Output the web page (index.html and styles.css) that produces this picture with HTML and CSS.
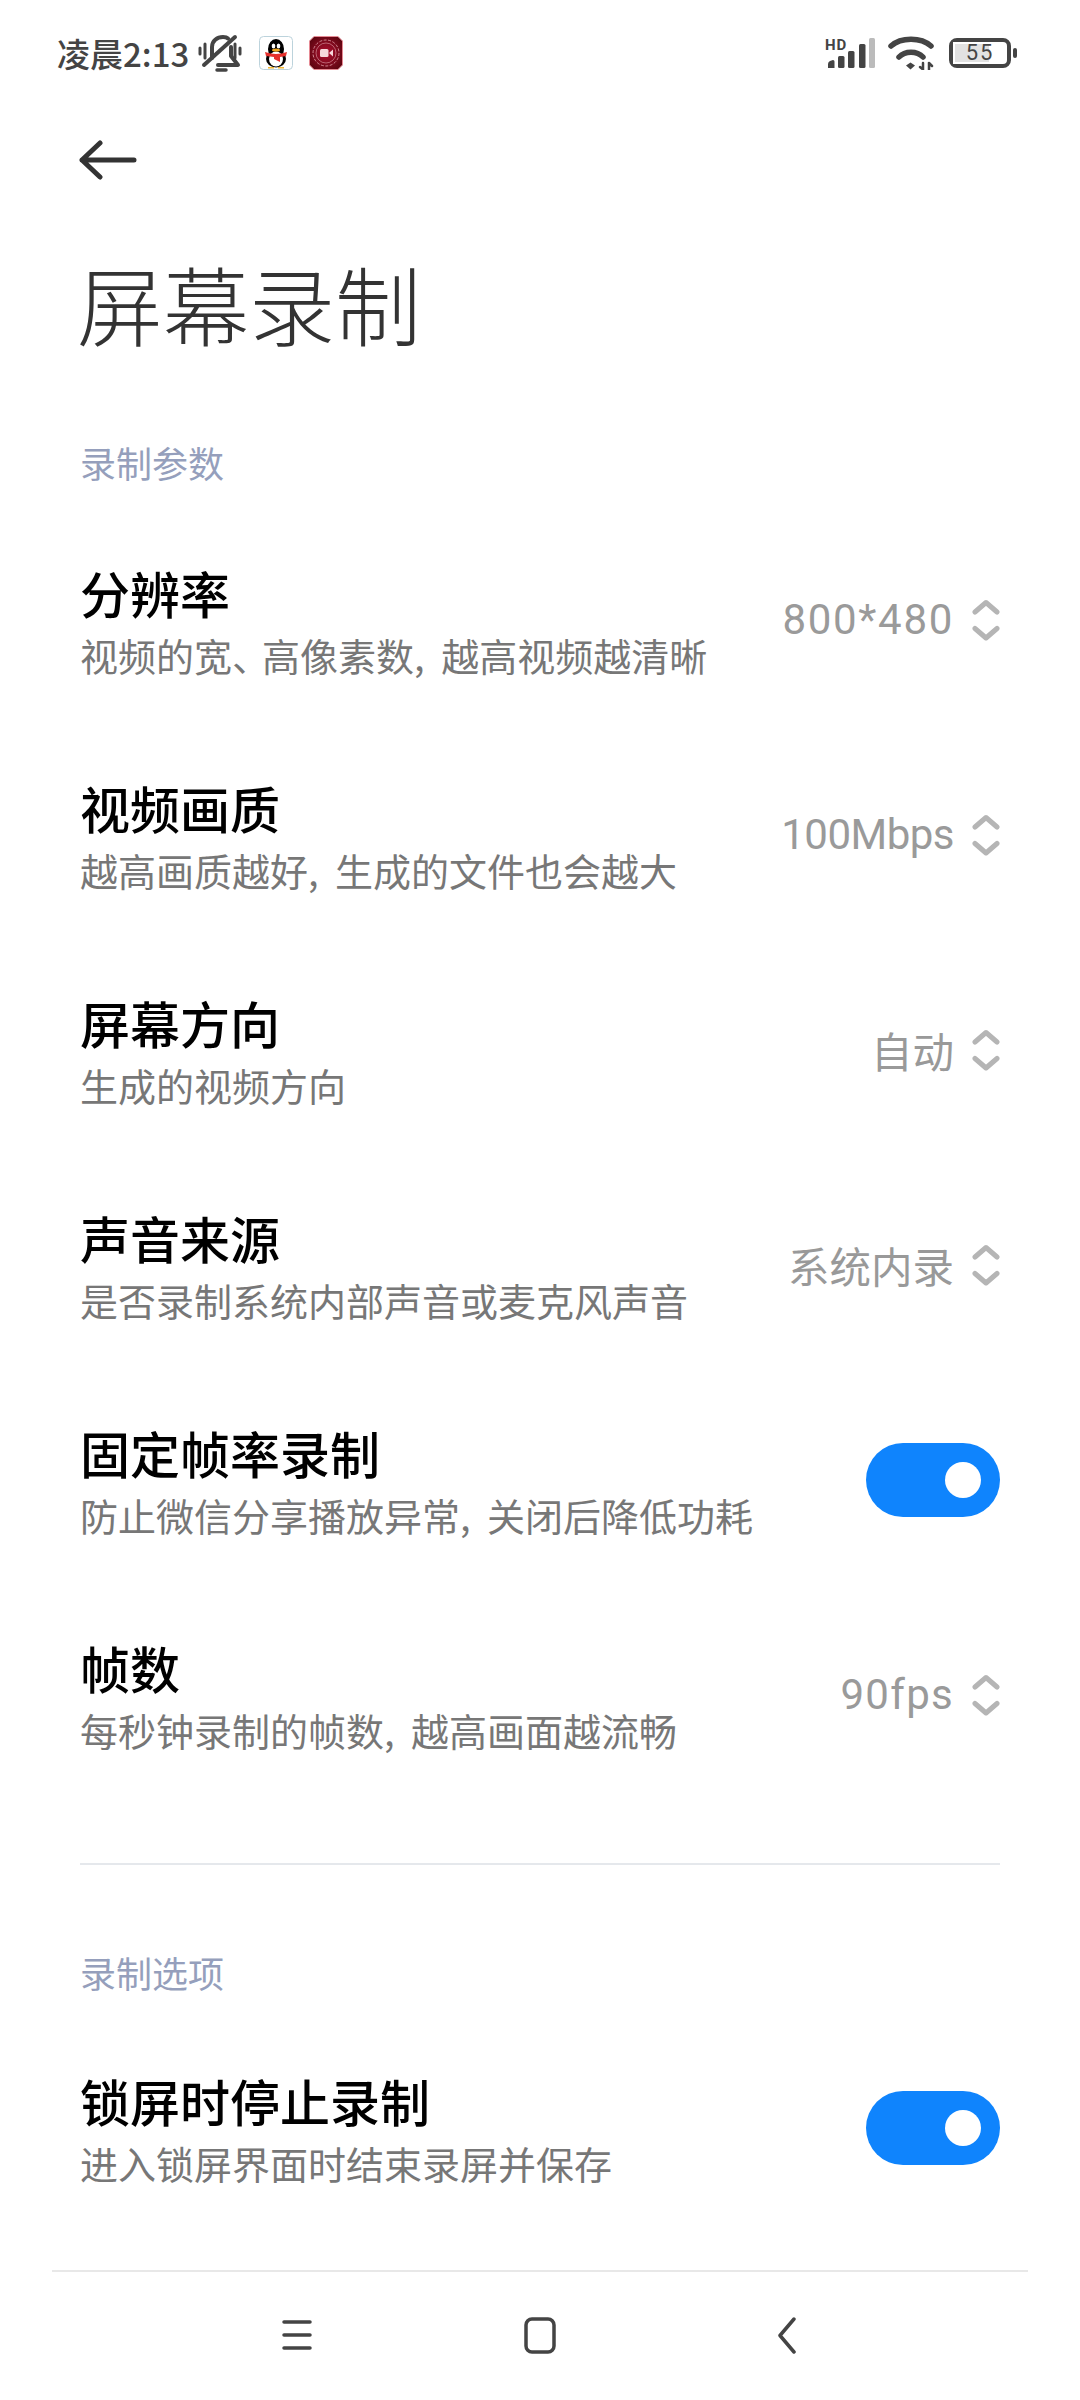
FILE: index.html
```html
<!DOCTYPE html>
<html lang="zh-CN">
<head>
<meta charset="utf-8">
<title>屏幕录制</title>
<link rel="stylesheet" href="styles.css">
</head>
<body>
<div class="page">
  <header class="status">
    <div class="status-left">
      <span class="time">凌晨2:13</span>
      <svg class="ico-bell" viewBox="0 0 45 40" fill="none" stroke="#444" stroke-width="4" stroke-linecap="round" stroke-linejoin="round">
        <path d="M14 25 V14 C14 8 19 4 25 4 C27 4 29 4.500 30 5.500"/>
        <path d="M33 14 V23 L40 32 H20"/>
        <path d="M6 32 L37 4"/>
        <path d="M2 15 V21 M7 11 V25 M37 11 V25 M42 15 V21" stroke-width="3"/>
        <path d="M19 37 H28" stroke-width="3.500"/>
      </svg>
      <svg class="ico-app" viewBox="0 0 34 34">
        <rect x=".5" y=".5" width="33" height="33" rx="4" fill="#fff" stroke="#bcd3dc"/>
        <ellipse cx="17" cy="13" rx="8" ry="10" fill="#000"/>
        <ellipse cx="17" cy="23" rx="10" ry="8.500" fill="#000"/>
        <ellipse cx="17" cy="23" rx="7" ry="7.500" fill="#fff"/>
        <ellipse cx="14.500" cy="10" rx="1.800" ry="2.500" fill="#fff"/>
        <ellipse cx="19.500" cy="10" rx="1.800" ry="2.500" fill="#fff"/>
        <ellipse cx="17" cy="14" rx="4" ry="1.600" fill="#f2a81d"/>
        <path d="M6 16 Q17 20 28 16 L27 20 L21 21 V26 L15 23 V21 L7 20 Z" fill="#e5302c"/>
        <path d="M9 31 H15 V32.500 H9 Z M19 31 H25 V32.500 H19 Z" fill="#f2b632"/>
      </svg>
      <svg class="ico-app" viewBox="0 0 34 34">
        <defs>
          <radialGradient id="recbg" cx="50%" cy="50%" r="60%">
            <stop offset="0" stop-color="#b01030"/>
            <stop offset="1" stop-color="#5c0510"/>
          </radialGradient>
        </defs>
        <path d="M5 .5 H29 L33.500 5 V29 L29 33.500 H5 L.5 29 V5 Z" fill="url(#recbg)" stroke="#e68a94"/>
        <circle cx="17" cy="17" r="13" fill="none" stroke="#f1b9c0" stroke-width=".7" stroke-dasharray="3 1.500"/>
        <circle cx="17" cy="17" r="10" fill="none" stroke="#f1b9c0" stroke-width=".5"/>
        <rect x="11" y="13" width="8.500" height="8" rx="1.500" fill="#f6d9dc"/>
        <path d="M20 17 L24 13.500 V20.500 Z" fill="#f6d9dc"/>
      </svg>
    </div>
    <div class="status-right">
      <svg class="ico-signal" viewBox="0 0 50 34">
        <text class="hd" x="0" y="14">HD</text>
        <path d="M3 32 V28 Q3 26 5 25 L8 24 Q9.500 24 9.500 25.500 V32 Z" fill="#444"/>
        <rect x="13" y="20" width="6.500" height="12" rx="1.500" fill="#444"/>
        <rect x="23" y="15" width="6.500" height="17" rx="1.500" fill="#444"/>
        <rect x="34" y="8" width="6.500" height="24" rx="1.500" fill="#444"/>
        <rect x="44" y="2" width="6" height="30" rx="1.500" fill="#bbb"/>
      </svg>
      <svg class="ico-wifi" viewBox="0 0 47 34" fill="none" stroke="#444" stroke-linecap="round">
        <path d="M3 10 C13 1 33 1 43 10" stroke-width="5.500"/>
        <path d="M11 21 C17 14.500 29 14.500 35 21" stroke-width="5.500"/>
        <path d="M18 29.500 L22.500 26.500 L27 29.500 L22.500 33.500 Z" fill="#444" stroke="none"/>
        <path d="M35 27 V33.500 M32 31 L35 33.500 M41 33.500 V27 M41 27 L44 30" stroke-width="2.500"/>
      </svg>
      <div class="battery">
        <div class="battery-body">
          <div class="battery-fill"></div>
          <span class="battery-num">55</span>
        </div>
        <div class="battery-cap"></div>
      </div>
    </div>
  </header>

  <main class="main">
    <svg class="back" viewBox="0 0 58 40" fill="none" stroke="#333" stroke-width="5" stroke-linecap="round" stroke-linejoin="round">
      <path d="M3 20 H55 M21 3 L3 20 L21 37"/>
    </svg>
    <h1 class="title">屏幕录制</h1>

    <h2 class="section">录制参数</h2>
    <div class="row">
      <div class="text"><div class="name">分辨率</div><div class="desc">视频的宽<span class="dun">、</span>高像素数<span class="comma">,</span> 越高视频越清晰</div></div>
      <div class="value"><span class="num num-wide">800*480</span><svg class="updown" viewBox="0 0 28 42"><path d="M3 13 L14 3.500 L25 13 M3 29.500 L14 39 L25 29.500"/></svg></div>
    </div>
    <div class="row">
      <div class="text"><div class="name">视频画质</div><div class="desc">越高画质越好<span class="comma">,</span> 生成的文件也会越大</div></div>
      <div class="value"><span class="num num-tight">100Mbps</span><svg class="updown" viewBox="0 0 28 42"><path d="M3 13 L14 3.500 L25 13 M3 29.500 L14 39 L25 29.500"/></svg></div>
    </div>
    <div class="row">
      <div class="text"><div class="name">屏幕方向</div><div class="desc">生成的视频方向</div></div>
      <div class="value"><span class="cjk">自动</span><svg class="updown" viewBox="0 0 28 42"><path d="M3 13 L14 3.500 L25 13 M3 29.500 L14 39 L25 29.500"/></svg></div>
    </div>
    <div class="row">
      <div class="text"><div class="name">声音来源</div><div class="desc">是否录制系统内部声音或麦克风声音</div></div>
      <div class="value"><span class="cjk">系统内录</span><svg class="updown" viewBox="0 0 28 42"><path d="M3 13 L14 3.500 L25 13 M3 29.500 L14 39 L25 29.500"/></svg></div>
    </div>
    <div class="row">
      <div class="text"><div class="name">固定帧率录制</div><div class="desc">防止微信分享播放异常<span class="comma">,</span> 关闭后降低功耗</div></div>
      <div class="toggle"><div class="knob"></div></div>
    </div>
    <div class="row">
      <div class="text"><div class="name">帧数</div><div class="desc">每秒钟录制的帧数<span class="comma">,</span> 越高画面越流畅</div></div>
      <div class="value"><span class="num">90fps</span><svg class="updown" viewBox="0 0 28 42"><path d="M3 13 L14 3.500 L25 13 M3 29.500 L14 39 L25 29.500"/></svg></div>
    </div>

    <hr class="divider">

    <h2 class="section section-2">录制选项</h2>
    <div class="row">
      <div class="text"><div class="name">锁屏时停止录制</div><div class="desc">进入锁屏界面时结束录屏并保存</div></div>
      <div class="toggle"><div class="knob"></div></div>
    </div>
  </main>

  <nav class="nav">
    <svg class="nav-menu" viewBox="0 0 30 30" fill="none" stroke="#444" stroke-width="3.500" stroke-linecap="round"><path d="M2 2 H28 M2 15 H28 M2 28 H28"/></svg>
    <svg class="nav-home" viewBox="0 0 32 37" fill="none" stroke="#444" stroke-width="3.500"><rect x="2" y="2" width="28" height="33" rx="6"/></svg>
    <svg class="nav-back" viewBox="0 0 18 37" fill="none" stroke="#444" stroke-width="3.500" stroke-linecap="round" stroke-linejoin="round"><path d="M16 2 L2 18.500 L16 35"/></svg>
  </nav>
</div>
</body>
</html>
```

FILE: styles.css
```css
* { box-sizing: border-box; }
html, body { margin: 0; padding: 0; background: #fff; }
body { font-family: "Noto Sans CJK SC", "Noto Sans", sans-serif; }
.page { width: 1080px; height: 2400px; display: flex; flex-direction: column; overflow: hidden; background: #fff; }

.status { height: 105px; flex: none; display: flex; align-items: center; justify-content: space-between; padding: 0 63px 0 57px; }
.status-left, .status-right { display: flex; align-items: center; }
.time { font-size: 33px; font-weight: 500; color: #444; line-height: 40px; white-space: nowrap; width: 131px; }
.ico-bell { width: 45px; height: 40px; margin-left: 10px; }
.ico-app { width: 34px; height: 34px; margin-left: 16px; }
.status-right { gap: 13px; }
.ico-signal { width: 50px; height: 34px; overflow: visible; }
.hd { font: 700 15px "Roboto", sans-serif; letter-spacing: 1px; fill: #444; }
.ico-wifi { width: 47px; height: 34px; }
.battery { display: flex; align-items: center; margin-left: 1px; }
.battery-body { width: 62px; height: 30px; border: 4px solid #444; border-radius: 8px; position: relative; }
.battery-fill { width: 70%; height: 100%; background: #e2e2e2; border: 2px solid #fff; }
.battery-num { position: absolute; inset: 0; text-align: center; font: 22px/22px "Roboto", sans-serif; color: #444; letter-spacing: 2px; }
.battery-cap { width: 4px; height: 10px; margin-left: 2px; border-radius: 2px; background: #444; }

.main { flex: 1; padding: 0 80px; display: flex; flex-direction: column; }
.back { width: 58px; height: 40px; margin-top: 35px; margin-left: -1px; flex: none; display: block; }
.title { margin: 0; font-size: 86px; font-weight: 300; color: #333; line-height: 110px; margin-top: 68px; margin-left: -3px; }
.section { margin: 0; font-size: 36px; font-weight: 400; color: #959fbc; line-height: 50px; margin-top: 79px; margin-bottom: 25px; }
.section-2 { margin-top: 82px; margin-bottom: 23px; }

.row { height: 215px; flex: none; display: flex; align-items: center; justify-content: space-between; }
.name { font-size: 50px; font-weight: 500; color: #000; line-height: 70px; white-space: nowrap; }
.desc { font-size: 38px; color: #777; line-height: 56px; white-space: nowrap; }
.dun { letter-spacing: -8px; }
.comma { letter-spacing: 8px; }
.value { display: flex; align-items: center; }
.num { font: 42px/60px "Roboto", sans-serif; color: #9a9a9a; letter-spacing: 1.300px; }
.num-wide { letter-spacing: 1.700px; }
.num-tight { letter-spacing: -.5px; }
.cjk { font-size: 41.500px; line-height: 60px; color: #999; }
.updown { width: 28px; height: 42px; margin-left: 18px; fill: none; stroke: #b5b5b5; stroke-width: 5; stroke-linecap: round; stroke-linejoin: round; }
.toggle { width: 134px; height: 74px; border-radius: 37px; background: #0f84fd; display: flex; align-items: center; justify-content: flex-end; padding-right: 19px; }
.knob { width: 36px; height: 36px; border-radius: 50%; background: #fff; }

.divider { margin: 61px 0 0; height: 2px; border: 0; background: #e5e8ec; flex: none; }

.nav { height: 130px; flex: none; margin: 0 52px; border-top: 2px solid #e8e8e8; display: flex; align-items: center; padding: 0 0 2px 230px; }
.nav-menu { width: 30px; height: 30px; }
.nav-home { width: 32px; height: 37px; margin-left: 212px; }
.nav-back { width: 18px; height: 37px; margin-left: 222px; }
```
